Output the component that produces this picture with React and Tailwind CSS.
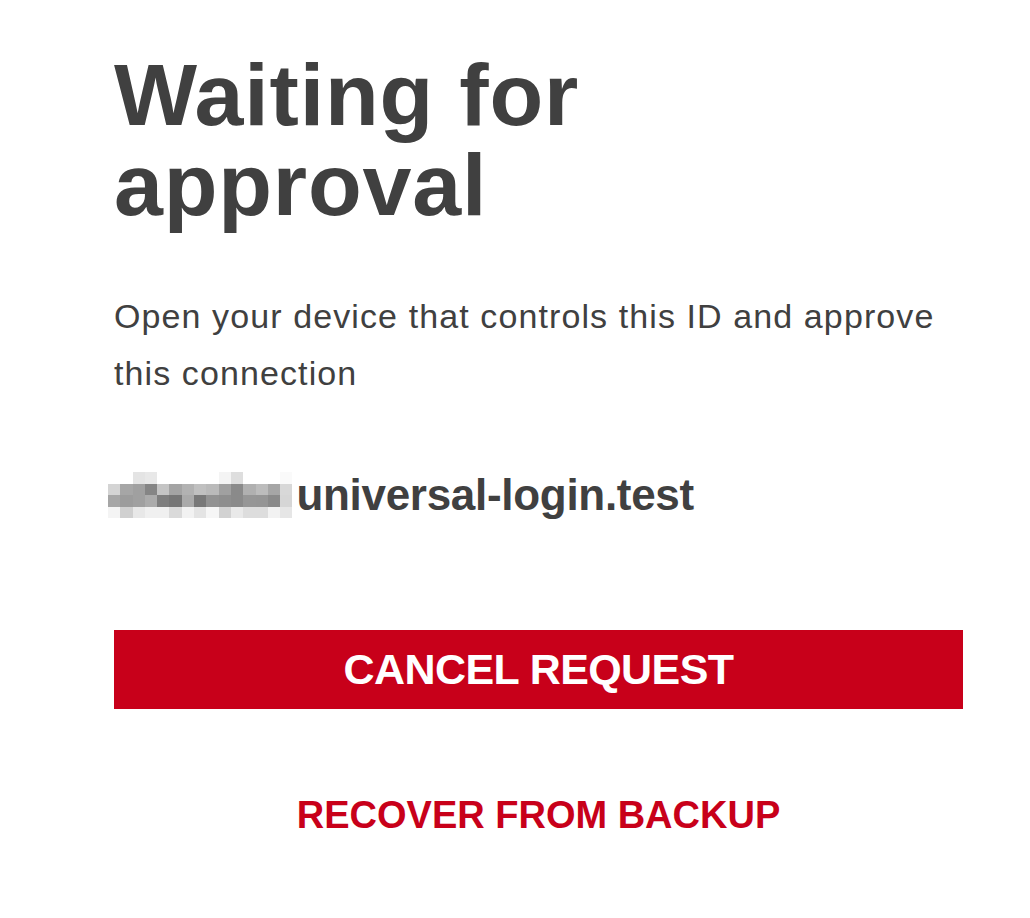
import React from 'react';

const blurRows = [
    ['#ffffff', '#ffffff', '#e4e4e4', '#e8e8e8', '#ffffff', '#ffffff', '#ffffff', '#ffffff', '#ffffff', '#f4f4f4', '#dedede', '#ffffff', '#ffffff', '#ffffff', '#fafafa'],
    ['#d4d4d4', '#a6a6a6', '#a0a0a0', '#858585', '#c4c4c4', '#a4a4a4', '#b2b2b2', '#c0c0c0', '#bababa', '#a0a0a0', '#8a8a8a', '#b0b0b0', '#bcbcbc', '#a6a6a6', '#d8d8d8'],
    ['#a6a6a6', '#9c9c9c', '#a0a0a0', '#ababab', '#7e7e7e', '#767676', '#aaaaaa', '#787878', '#929292', '#8e8e8e', '#8a8a8a', '#969696', '#959595', '#8a8a8a', '#d6d6d6'],
    ['#f4f4f4', '#d0d0d0', '#e8e8e8', '#f0f0f0', '#f0f0f0', '#dadada', '#f2f2f2', '#e4e4e4', '#f6f6f6', '#d2d2d2', '#e9e9e9', '#dddddd', '#dddddd', '#f2f2f2', '#e6e6e6'],
];

// pixelated account name, blurred in the original
const PixelatedName = () => (
    <div className="flex flex-col -ml-[6px]">
        {blurRows.map((row, i) => (
            <div key={i} className="flex">
                {row.map((c, j) => (
                    <div key={j} className="w-[12.3px] h-[11.5px]" style={{ backgroundColor: c }} />
                ))}
            </div>
        ))}
    </div>
);

export default function App() {
    return (
        <div className="min-h-screen bg-white font-['Liberation_Sans',Arial,sans-serif] text-[#404040]">
            <div className="pl-[114px] w-[963px] pt-[50px]">
                <h1 className="text-[88px] leading-[90px] font-bold tracking-[0.8px]">
                    Waiting for
                    <br />
                    approval
                </h1>

                <p className="mt-[58px] text-[34px] leading-[57px] tracking-[1.1px]">
                    Open your device that controls this ID and approve this connection
                </p>

                <div className="mt-[70px] h-[46px] flex items-center">
                    <PixelatedName />
                    <span className="ml-[4px] text-[44px] leading-[46px] font-bold tracking-[-0.3px]">universal-login.test</span>
                </div>

                <button className="mt-[112px] w-full h-[79px] bg-[#c8001a] text-white text-[43px] font-bold tracking-[-0.6px] flex items-center justify-center">
                    CANCEL REQUEST
                </button>

                <div className="mt-[84px] flex justify-center">
                    <button className="text-[#c8001a] text-[38px] leading-[44px] font-bold">RECOVER FROM BACKUP</button>
                </div>
            </div>
        </div>
    );
}
